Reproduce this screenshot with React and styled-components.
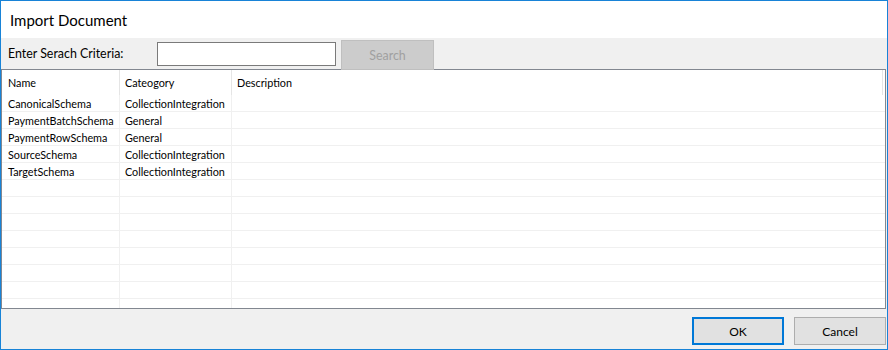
import React from 'react';
import styled, { createGlobalStyle } from 'styled-components';

const GlobalStyle = createGlobalStyle`
  html, body {
    margin: 0;
    padding: 0;
    background: #ffffff;
  }
  body {
    font-family: Lato, "Noto Sans", "Liberation Sans", sans-serif;
  }
`;

const Window = styled.div`
  width: 888px;
  height: 350px;
  box-sizing: border-box;
  border: 1px solid #1883d7;
  display: flex;
  flex-direction: column;
  background: #f0f0f0;
  overflow: hidden;
`;

const TitleBar = styled.div`
  height: 37px;
  background: #ffffff;
  display: flex;
  align-items: center;
  padding-left: 9px;
  font-size: 15px;
  color: #000000;
`;

const Toolbar = styled.div`
  height: 31px;
  display: flex;
  align-items: flex-start;
  background: #f0f0f0;
`;

const Label = styled.span`
  width: 156px;
  height: 31px;
  line-height: 31px;
  padding-left: 7px;
  box-sizing: border-box;
  font-size: 12.4px;
  color: #000000;
`;

const SearchInput = styled.input`
  width: 179px;
  height: 24px;
  margin-top: 4px;
  box-sizing: border-box;
  border: 1px solid #7a7a7a;
  background: #ffffff;
  outline: none;
  padding: 0 3px;
  font-family: inherit;
  font-size: 12px;
`;

const SearchButton = styled.button`
  position: relative;
  z-index: 1;
  width: 93px;
  height: 30px;
  margin: 2px 0 -1px 5px;
  box-sizing: border-box;
  border: 1px solid #bfbfbf;
  background: #cccccc;
  color: #a0a0a0;
  font-family: inherit;
  font-size: 12.4px;
  padding: 0;
`;

const Grid = styled.div`
  flex: 1;
  margin-right: 1px;
  border: 1px solid #828790;
  background: #ffffff;
  overflow: hidden;
`;

const Row = styled.div`
  display: grid;
  grid-template-columns: 118px 112px 651px;
  height: ${p => (p.header ? '25px' : '17px')};
  box-sizing: border-box;
  border-bottom: ${p => (p.header ? 'none' : '1px solid #f0f0f0')};
`;

const Cell = styled.div`
  box-sizing: border-box;
  padding-left: ${p => (p.first ? '6px' : '5px')};
  padding-top: ${p => (p.header ? '1px' : '1px')};
  border-right: ${p => (p.last && !p.header ? 'none' : `1px solid ${p.header ? '#e5e5e5' : '#f0f0f0'}`)};
  font-size: 10.8px;
  color: #000000;
  line-height: ${p => (p.header ? '24px' : '16px')};
  white-space: nowrap;
  overflow: hidden;
`;

const Footer = styled.div`
  height: 40px;
  display: flex;
  justify-content: flex-end;
  align-items: flex-start;
  gap: 10px;
  padding: 8px 1px 0 0;
  box-sizing: border-box;
`;

const DialogButton = styled.button`
  width: 92px;
  height: 28px;
  box-sizing: border-box;
  border: ${p => (p.primary ? '2px solid #0078d7' : '1px solid #adadad')};
  background: #e1e1e1;
  color: #000000;
  font-family: inherit;
  font-size: 12px;
  padding: 0;
`;

const documents = [
  { name: 'CanonicalSchema', category: 'CollectionIntegration' },
  { name: 'PaymentBatchSchema', category: 'General' },
  { name: 'PaymentRowSchema', category: 'General' },
  { name: 'SourceSchema', category: 'CollectionIntegration' },
  { name: 'TargetSchema', category: 'CollectionIntegration' },
];

const rows = [...documents, ...Array.from({ length: 9 }, () => ({ name: '', category: '' }))];

export default function App() {
  return (
    <>
      <GlobalStyle />
      <Window>
        <TitleBar>Import Document</TitleBar>
        <Toolbar>
          <Label>Enter Serach Criteria:</Label>
          <SearchInput type="text" />
          <SearchButton disabled>Search</SearchButton>
        </Toolbar>
        <Grid>
          <Row header>
            <Cell header first>Name</Cell>
            <Cell header>Cateogory</Cell>
            <Cell header last>Description</Cell>
          </Row>
          {rows.map((r, i) => (
            <Row key={i}>
              <Cell first>{r.name}</Cell>
              <Cell>{r.category}</Cell>
              <Cell last></Cell>
            </Row>
          ))}
        </Grid>
        <Footer>
          <DialogButton primary>OK</DialogButton>
          <DialogButton>Cancel</DialogButton>
        </Footer>
      </Window>
    </>
  );
}
